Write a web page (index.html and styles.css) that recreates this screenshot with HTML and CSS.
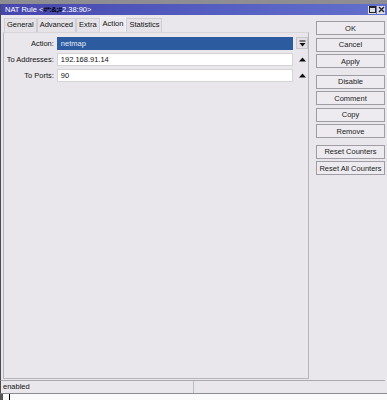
FILE: index.html
```html
<!DOCTYPE html>
<html lang="en">
	<head>
		<meta charset="UTF-8" />
		<meta name="viewport" content="width=device-width, initial-scale=1.0" />
		<title>NAT Rule</title>
		<link rel="stylesheet" href="styles.css">
	</head>
	<body>
		<div class="window">
			<div class="top-strip"></div>
			<div class="titlebar">
				<span class="title">NAT Rule &lt;<span class="redact">#*:&amp;;#</span>2.38:90&gt;</span>
				<span class="win-buttons">
					<span class="win-btn">
						<svg width="7" height="7" viewBox="0 0 7 7"><rect x="0.5" y="0.5" width="6" height="6" fill="none" stroke="#222" /><line x1="0" y1="1.5" x2="7" y2="1.5" stroke="#222" /></svg>
					</span>
					<span class="win-btn">
						<svg width="7" height="7" viewBox="0 0 7 7"><path d="M1 1 L6 6 M6 1 L1 6" stroke="#222" stroke-width="1.4" /></svg>
					</span>
				</span>
			</div>
			<div class="main">
				<div class="left">
					<div class="tabs">
						<span class="tab">General</span>
						<span class="tab">Advanced</span>
						<span class="tab">Extra</span>
						<span class="tab active">Action</span>
						<span class="tab">Statistics</span>
					</div>
					<div class="panel">
						<div class="row">
							<label>Action:</label>
							<div class="field selected">netmap</div>
							<span class="drop">
								<svg width="7" height="7" viewBox="0 0 7 7"><line x1="0.5" y1="1" x2="6.5" y2="1" stroke="#111" /><path d="M0.5 3 L6.5 3 L3.5 6.5 Z" fill="#111" /></svg>
							</span>
						</div>
						<div class="row">
							<label>To Addresses:</label>
							<div class="field">192.168.91.14</div>
							<span class="up">
								<svg width="7" height="5" viewBox="0 0 7 5"><path d="M0 4.5 L7 4.5 L3.5 0.5 Z" fill="#111" /></svg>
							</span>
						</div>
						<div class="row">
							<label>To Ports:</label>
							<div class="field">90</div>
							<span class="up">
								<svg width="7" height="5" viewBox="0 0 7 5"><path d="M0 4.5 L7 4.5 L3.5 0.5 Z" fill="#111" /></svg>
							</span>
						</div>
					</div>
				</div>
				<div class="right">
					<button>OK</button>
					<button>Cancel</button>
					<button>Apply</button>
					<button class="group">Disable</button>
					<button>Comment</button>
					<button>Copy</button>
					<button>Remove</button>
					<button class="group">Reset Counters</button>
					<button>Reset All Counters</button>
				</div>
			</div>
			<div class="status">
				<span class="cell first">enabled</span>
				<span class="cell"></span>
			</div>
			<div class="bottom-strip"><span class="mark"></span></div>
		</div>
	</body>
</html>
```

FILE: styles.css
```css
body,
html {
	margin: 0px;
	background: #e9e7ec;
	width: 100%;
	height: 100%;
	font-family: "Liberation Sans", Arial, sans-serif;
	font-size: 7.5px;
	color: #111;
}
.window {
	width: 387px;
	height: 400px;
	display: flex;
	flex-direction: column;
	overflow: hidden;
}
.top-strip {
	height: 4px;
	background: #8e8e92;
}
.titlebar {
	height: 11px;
	display: flex;
	align-items: center;
	justify-content: space-between;
	background: linear-gradient(to right, #4646ad, #5660c2 60%, #6270cc);
	color: #fff;
	padding: 0 2px 0 4px;
	border-left: 1px solid #4a4a55;
}
.title {
	font-size: 7.5px;
	white-space: nowrap;
}
.redact {
	color: #000;
	font-weight: bold;
	letter-spacing: -0.5px;
}
.win-buttons {
	display: flex;
	gap: 1px;
}
.win-btn {
	width: 8px;
	height: 8px;
	background: #dcdce4;
	display: flex;
	align-items: center;
	justify-content: center;
}
.main {
	height: 366px;
	flex: none;
	display: flex;
	border-left: 1px solid #4a4a55;
	border-bottom: 1px solid #a9a8ad;
	margin-right: 2px;
	padding-top: 2px;
	box-sizing: border-box;
}
.left {
	width: 306px;
	margin-left: 2px;
	display: flex;
	flex-direction: column;
}
.tabs {
	display: flex;
	align-items: flex-end;
	height: 15px;
	padding-left: 1px;
}
.tab {
	border: 1px solid #d0ced4;
	border-bottom: none;
	background: #e5e3e8;
	padding: 2px 2px 3px;
	line-height: 8px;
}
.tab.active {
	background: #ece9ef;
	border-color: #f4f3f6;
	padding-bottom: 4px;
}
.panel {
	flex: 1;
	border: 1px solid #b6b5ba;
	border-top-color: #d7d5da;
	padding-top: 4px;
	margin-bottom: 1px;
}
.row {
	display: flex;
	align-items: center;
	height: 12px;
	margin-bottom: 4px;
}
.row label {
	width: 50px;
	text-align: right;
	padding-right: 3px;
}
.field {
	width: 232px;
	height: 11px;
	line-height: 11px;
	background: #fff;
	border: 1px solid #d4d3d8;
	padding-left: 3px;
	box-sizing: content-box;
}
.field.selected {
	background: #2d5b9f;
	color: #e6ecf6;
	border-color: #2d5b9f;
}
.drop,
.up {
	width: 12px;
	height: 12px;
	display: flex;
	align-items: center;
	justify-content: center;
	margin-left: 3px;
}
.drop {
	background: #e2e0e6;
	border: 1px solid #c8c6cc;
	box-sizing: border-box;
}
.right {
	display: flex;
	flex-direction: column;
	gap: 2.5px;
	padding-left: 7px;
	padding-top: 4px;
}
button {
	width: 69px;
	height: 14px;
	padding: 0;
	font-family: "Liberation Sans", Arial, sans-serif;
	font-size: 7.5px;
	color: #222;
	background: #edebf0;
	border: 1px solid #9e9da3;
	border-radius: 0;
}
button.group {
	margin-top: 4px;
}
.status {
	height: 12px;
	flex: none;
	display: flex;
	border-left: 1px solid #4a4a55;
	border-bottom: 1px solid #8d8c92;
}
.cell {
	flex: 1;
	border-left: 1px solid #bebdc2;
	padding-left: 2px;
	line-height: 12px;
}
.cell.first {
	border-left: none;
	width: 190px;
	flex: none;
}
.bottom-strip {
	flex: 1;
	background: #fafafa;
	border-left: 3px solid #555;
	position: relative;
}
.mark {
	position: absolute;
	left: 6px;
	top: 0;
	width: 1px;
	height: 6px;
	background: #000;
}
```
